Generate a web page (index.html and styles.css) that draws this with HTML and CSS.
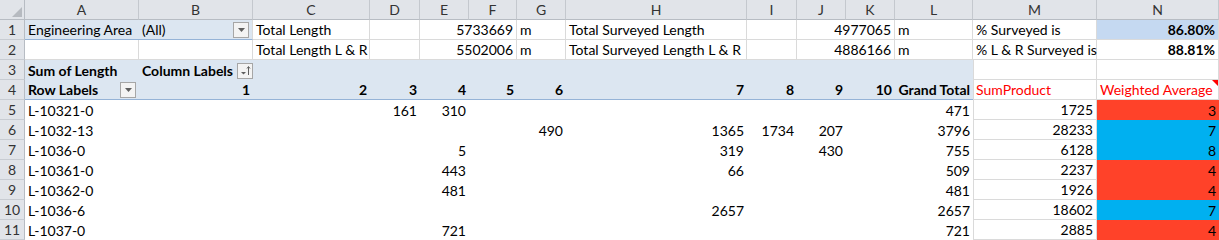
FILE: index.html
```html
<!DOCTYPE html>
<html>
<head>
<meta charset="utf-8">
<link rel="stylesheet" href="styles.css">
</head>
<body>
<div class="sheet">
  <div class="corner"><svg width="10" height="10" viewBox="0 0 10 10"><polygon points="10,0 10,10 0,10" fill="#b6bac0"/></svg></div>
  <div class="ch">A</div><div class="ch">B</div><div class="ch">C</div><div class="ch">D</div><div class="ch">E</div><div class="ch">F</div><div class="ch">G</div><div class="ch">H</div><div class="ch">I</div><div class="ch">J</div><div class="ch">K</div><div class="ch">L</div><div class="ch">M</div><div class="ch">N</div>

  <div class="rh">1</div>
  <div class="pv pvl">Engineering Area</div>
  <div class="pv pvl gr fx"><span>(All)</span><span class="dd"><svg width="7" height="4" viewBox="0 0 7 4"><polygon points="0,0 7,0 3.5,4" fill="#5f5f5f"/></svg></span></div>
  <div class="g">Total Length</div>
  <div class="g"></div>
  <div class="g r s2">5733669</div>
  <div class="g">m</div>
  <div class="g">Total Surveyed Length</div>
  <div class="g"></div>
  <div class="g r s2">4977065</div>
  <div class="g">m</div>
  <div class="g">% Surveyed is</div>
  <div class="g r b sel">86.80%</div>

  <div class="rh">2</div>
  <div class="g"></div>
  <div class="g"></div>
  <div class="g">Total Length L &amp; R</div>
  <div class="g"></div>
  <div class="g r s2">5502006</div>
  <div class="g">m</div>
  <div class="g">Total Surveyed Length L &amp; R</div>
  <div class="g"></div>
  <div class="g r s2">4886166</div>
  <div class="g">m</div>
  <div class="g">% L &amp; R Surveyed is</div>
  <div class="g r b">88.81%</div>

  <div class="rh">3</div>
  <div class="pv b">Sum of Length</div>
  <div class="pv b fx"><span>Column Labels</span><span class="dd"><svg width="11" height="11" viewBox="0 0 11 11"><polygon points="1,7 6,7 3.5,9.5" fill="#5f5f5f"/><path d="M8.5 10V2M7 3.5L8.5 1.5L10 3.5" stroke="#5f5f5f" stroke-width="1" fill="none"/></svg></span></div>
  <div class="pv s10"></div>
  <div class="g ml"></div>
  <div class="g"></div>

  <div class="rh">4</div>
  <div class="pv pvh b fx"><span>Row Labels</span><span class="dd"><svg width="7" height="4" viewBox="0 0 7 4"><polygon points="0,0 7,0 3.5,4" fill="#5f5f5f"/></svg></span></div>
  <div class="pv pvh b r">1</div>
  <div class="pv pvh b r">2</div>
  <div class="pv pvh b r">3</div>
  <div class="pv pvh b r">4</div>
  <div class="pv pvh b r">5</div>
  <div class="pv pvh b r">6</div>
  <div class="pv pvh b r">7</div>
  <div class="pv pvh b r">8</div>
  <div class="pv pvh b r">9</div>
  <div class="pv pvh b r">10</div>
  <div class="pv pvh b r">Grand Total</div>
  <div class="g ml red">SumProduct</div>
  <div class="g red cm">Weighted Average</div>

  <div class="rh">5</div>
  <div>L-10321-0</div><div></div><div></div><div class="r">161</div><div class="r">310</div><div></div><div></div><div></div><div></div><div></div><div></div><div class="r">471</div>
  <div class="g ml r">1725</div><div class="r fr">3</div>

  <div class="rh">6</div>
  <div>L-1032-13</div><div></div><div></div><div></div><div></div><div></div><div class="r">490</div><div class="r">1365</div><div class="r">1734</div><div class="r">207</div><div></div><div class="r">3796</div>
  <div class="g ml r">28233</div><div class="r fb">7</div>

  <div class="rh">7</div>
  <div>L-1036-0</div><div></div><div></div><div></div><div class="r">5</div><div></div><div></div><div class="r">319</div><div></div><div class="r">430</div><div></div><div class="r">755</div>
  <div class="g ml r">6128</div><div class="r fb">8</div>

  <div class="rh">8</div>
  <div>L-10361-0</div><div></div><div></div><div></div><div class="r">443</div><div></div><div></div><div class="r">66</div><div></div><div></div><div></div><div class="r">509</div>
  <div class="g ml r">2237</div><div class="r fr">4</div>

  <div class="rh">9</div>
  <div>L-10362-0</div><div></div><div></div><div></div><div class="r">481</div><div></div><div></div><div></div><div></div><div></div><div></div><div class="r">481</div>
  <div class="g ml r">1926</div><div class="r fr">4</div>

  <div class="rh">10</div>
  <div>L-1036-6</div><div></div><div></div><div></div><div></div><div></div><div></div><div class="r">2657</div><div></div><div></div><div></div><div class="r">2657</div>
  <div class="g ml r">18602</div><div class="r fb">7</div>

  <div class="rh">11</div>
  <div>L-1037-0</div><div></div><div></div><div></div><div class="r">721</div><div></div><div></div><div></div><div></div><div></div><div></div><div class="r">721</div>
  <div class="g ml r">2885</div><div class="r fr">4</div>
</div>
</body>
</html>
```

FILE: styles.css
```css
* { box-sizing: border-box; }
html, body { margin: 0; padding: 0; background: #fff; overflow: hidden; }
body {
  font-family: Lato, "Liberation Sans", sans-serif;
  font-size: 14px;
  color: #000;
}
.sheet {
  display: grid;
  grid-template-columns: 25px 114px 114px 117px 50px 49px 48px 49px 181px 50px 49px 49px 78px 124px 122px;
  grid-auto-rows: 20px;
  width: 1219px;
}
.sheet > div {
  line-height: 19px;
  padding: 1px 3px 0;
  white-space: nowrap;
  min-width: 0;
}
.corner {
  background: #e1e4e9;
  border-right: 1px solid #b7bcc3;
  border-bottom: 1px solid #b7bcc3;
  display: flex;
  align-items: flex-end;
  justify-content: flex-end;
  padding: 0 2px 2px 0 !important;
}
.corner svg { display: block; }
.ch {
  background: #e1e4e9;
  border-right: 1px solid #c4c8ce;
  border-bottom: 1px solid #b7bcc3;
  text-align: center;
  color: #333;
  line-height: 18px !important;
}
.rh {
  background: #e1e4e9;
  border-right: 1px solid #b7bcc3;
  border-bottom: 1px solid #c8ccd2;
  text-align: center;
  color: #333;
  padding: 1px 0 0 !important;
  line-height: 18px !important;
}
.g {
  border-right: 1px solid #dadada;
  border-bottom: 1px solid #dadada;
  line-height: 18px !important;
}
.gr { border-right: 1px solid #dadada; }
.r { text-align: right; }
.b { font-weight: bold; }
.s2 { grid-column: span 2; }
.s10 { grid-column: span 10; }
.pv { background: #dce6f1; }
.pvl, .pvh { border-bottom: 1px solid #95b3d7; line-height: 18px !important; }
.sel { background: #c5d9f1; }
.ml { box-shadow: inset 1px 0 0 #dadada; }
.red { color: #ff0000; }
.fr { background: #ff4229; }
.fb { background: #00b0f0; }
.fx {
  display: flex;
  align-items: center;
  justify-content: space-between;
}
.dd {
  width: 16px;
  height: 16px;
  flex: none;
  border: 1px solid #a6a6a6;
  background: #f3f3f3;
  display: flex;
  align-items: center;
  justify-content: center;
  margin-left: 4px;
}
.dd svg { display: block; }
.cm { position: relative; }
.cm::after {
  content: "";
  position: absolute;
  top: 0;
  right: 0;
  border-top: 6px solid #ff0000;
  border-left: 6px solid transparent;
}
```
